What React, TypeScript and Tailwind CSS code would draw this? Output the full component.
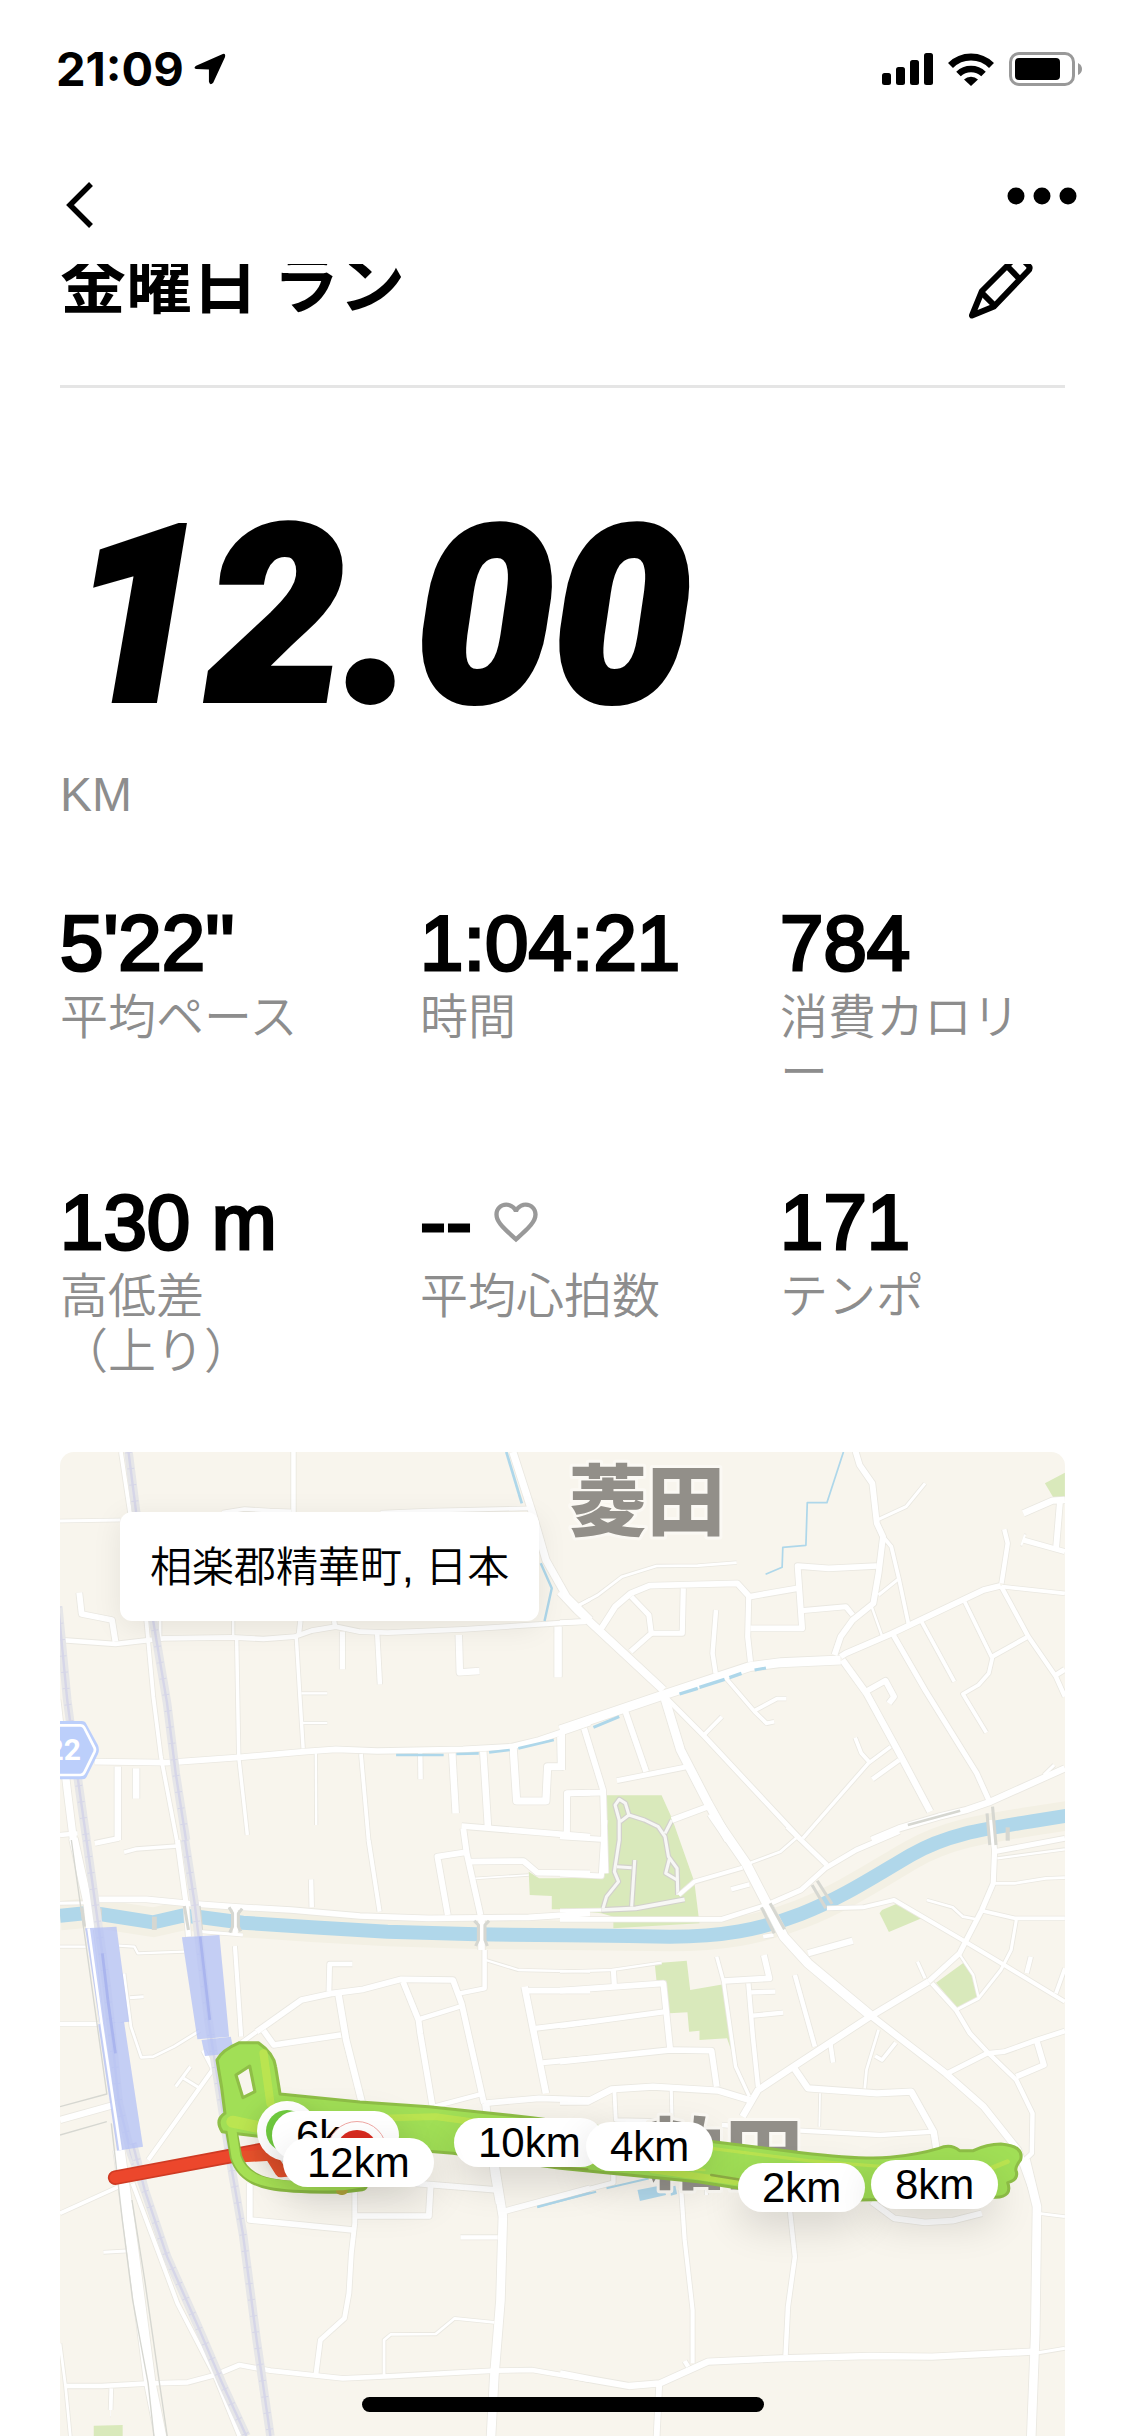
import React from "react";
import { MdFavoriteBorder } from "react-icons/md";

type Line = [number, string];

type Tile = {
  x: number;
  y: number;
  roads: Line[];
  water?: Line[];
  lakes?: string[];
  parks?: string[];
  paths?: Line[];
  rails?: string[];
  stations?: string[];
  edges?: Line[];
};

const tiles: Tile[] = [
  {
    x: 50,
    y: 1440,
    rails: ["228,36 250,216 300,545 340,790 365,1000 395,1200", "24,500 50,780 80,1010 106,1200"],
    roads: [
      [12, "206,36 232,216 280,545 300,770 322,950 368,1200"],
      [22, "20,780 50,1050 68,1200"],
      [14, "707,36 707,216"],
      [10, "29,243 205,240"],
      [12, "500,218 565,207 640,212 700,214"],
      [12, "960,218 1100,212 1390,205"],
      [22, "1344,36 1400,216 1440,360 1500,470 1568,540"],
      [18, "85,458 92,522 180,540 190,605"],
      [15, "29,600 190,612 330,595 530,592 620,597 710,590 760,572 830,560 900,575 980,578 1200,568 1440,552 1568,543"],
      [8, "320,543 320,595"],
      [8, "532,543 532,592"],
      [14, "727,543 722,590"],
      [14, "825,543 828,562"],
      [11, "542,597 548,950 562,1080 573,1185"],
      [11, "715,590 725,760 735,925"],
      [8, "730,760 805,760"],
      [8, "733,849 805,849"],
      [16, "849,575 849,688"],
      [14, "950,580 958,733"],
      [20, "1187,585 1190,697 1247,693"],
      [22, "1475,560 1475,712"],
      [10, "1528,500 1568,478"],
      [18, "130,965 340,968 550,952 740,935 830,928 950,933 1200,928 1340,920 1420,900 1568,848"],
      [20, "197,980 197,1200"],
      [20, "250,985 250,1076"],
      [8, "772,940 773,1155"],
      [12, "903,942 925,1200"],
      [14, "1075,940 1076,1018"],
      [20, "1168,940 1178,1120"],
      [20, "1258,935 1272,1165"],
      [22, "1345,925 1355,1083 1440,1083 1445,980 1485,980 1483,890"],
      [18, "1500,1190 1502,1060 1568,1058"],
    ],
    water: [
      [8, "1325,36 1370,190"],
      [7, "1425,370 1457,445 1436,543"],
      [8, "1005,945 1143,945"],
      [8, "1180,942 1245,940"],
      [8, "1275,937 1335,930"],
      [8, "1360,925 1463,900"],
    ],
  },
  {
    x: 560,
    y: 1440,
    parks: ["1408,130 1466,98 1466,172 1432,172"],
    roads: [
      [24, "0,455 50,510 300,750"],
      [26, "300,760 350,930 430,1090 490,1200"],
      [9, "48,500 110,465 180,410 280,378 400,377 513,368"],
      [18, "120,565 160,500 205,460 260,437 515,430 550,470 690,445"],
      [16, "207,470 258,525 265,580 205,635"],
      [16, "358,445 355,580 265,580"],
      [14, "453,510 443,640 452,700"],
      [16, "548,470 545,590 553,665"],
      [18, "553,565 703,565 690,378 780,385 920,378"],
      [16, "700,512 830,500 850,525"],
      [18, "857,30 870,75 907,130 920,250 938,290 925,400 910,490 850,540 815,590 797,645"],
      [10, "925,238 1005,200 1060,130"],
      [12, "930,280 962,320 985,420 1012,553"],
      [10, "985,415 925,465"],
      [8, "905,500 935,588"],
      [28, "0,870 300,765 550,680 640,668 815,660"],
      [18, "815,650 830,640 965,580 1230,450 1280,437"],
      [14, "1290,268 1300,310 1282,430"],
      [12, "1285,440 1466,460"],
      [14, "1280,437 1360,590 1440,710 1466,770"],
      [16, "1440,705 1466,688"],
      [20, "1345,220 1430,182 1466,180"],
      [18, "1452,182 1440,330"],
      [16, "1345,300 1466,335"],
      [36, "1342,299 1348,301"],
      [12, "1050,545 1145,725"],
      [12, "1175,485 1255,655 1245,700 1215,735 1170,762 1238,878"],
      [14, "1255,650 1355,592"],
      [16, "965,580 1060,750 1210,1000 1245,1080"],
      [20, "820,660 890,760 980,930 1075,1115"],
      [18, "888,755 945,722 970,770 955,790"],
      [11, "960,920 895,970 705,1195"],
      [12, "857,893 875,940 900,968"],
      [14, "985,960 907,1018"],
      [15, "300,765 420,890 700,1200"],
      [12, "415,888 470,830"],
      [12, "480,712 565,815 600,850 622,845"],
      [12, "565,812 630,776 657,776"],
      [18, "70,865 125,1050 132,1300"],
      [18, "190,815 250,995"],
      [16, "165,1022 370,980"],
      [18, "20,1180 20,1060 120,1058"],
      [20, "5,880 5,990"],
      [16, "0,548 75,545"],
      [10, "0,560 0,710"],
      [18, "325,1140 430,1100"],
      [20, "905,1200 985,1165 1100,1130 1180,1110 1250,1085 1466,985"],
      [10, "1405,1005 1435,975"],
    ],
    water: [
      [5, "823,36 775,188 718,188 714,316 647,322 645,382 597,403"],
      [10, "347,762 400,745"],
      [10, "405,742 478,718"],
      [10, "492,713 527,700"],
      [9, "565,690 598,684"],
      [9, "97,862 172,830"],
    ],
    edges: [[8, "1010,1155 1162,1112"]],
  },
  {
    x: 50,
    y: 1820,
    parks: ["1390,155 1420,175 1575,175 1575,268 1457,268 1457,228 1393,225"],
    rails: [
      "106,60 130,240 165,500 200,850 235,1000 275,1110",
      "392,60 420,250 460,600 490,800 528,1050",
    ],
    stations: [
      "102,325 193,320 230,605 145,613",
      "140,613 215,605 270,980 195,992",
      "383,352 492,345 520,650 428,658",
      "440,660 525,650 535,700 450,708",
    ],
    roads: [
      [26, "68,55 110,250 118,330"],
      [14, "118,330 150,610 185,850 205,1000"],
      [16, "370,60 395,250 402,350"],
      [14, "445,690 475,750"],
      [14, "29,45 80,40"],
      [16, "130,70 200,55"],
      [12, "215,97 250,87 370,78"],
      [18, "115,238 280,238 400,250 560,262 700,270 900,288 1100,295 1390,292 1568,280"],
      [10, "29,250 110,248"],
      [10, "440,335 560,345"],
      [13, "537,378 555,650"],
      [8, "200,377 245,380 255,400 390,395"],
      [8, "29,380 105,380"],
      [9, "215,460 235,620 265,712 300,710 360,680 435,632"],
      [10, "232,533 272,530"],
      [14, "29,612 140,612"],
      [10, "365,800 408,740"],
      [10, "388,775 435,805"],
      [13, "285,1020 475,745 560,665 600,635"],
      [18, "600,635 730,540 820,520 910,508 1020,478 1170,480 1195,550 1260,850"],
      [18, "620,632 650,675 845,645"],
      [14, "758,178 760,262"],
      [15, "810,515 812,432 878,432"],
      [20, "838,525 860,660 905,845"],
      [18, "1025,485 1070,600 1075,640 1110,855"],
      [14, "1070,598 1190,560"],
      [14, "1190,520 1262,505 1262,390"],
      [8, "1265,420 1360,450 1568,455"],
      [13, "925,60 957,275"],
      [18, "1155,285 1125,110 1205,97"],
      [18, "1200,25 1210,100 1250,285"],
      [18, "1195,18 1568,50"],
      [18, "1220,125 1375,123 1415,158 1568,160"],
      [6, "1235,175 1390,165"],
      [20, "1253,290 1253,390"],
      [16, "538,262 538,340"],
      [20, "1378,500 1440,820"],
      [18, "1375,512 1568,512"],
      [16, "1410,625 1568,605"],
      [16, "1430,728 1568,715"],
      [14, "1115,860 1260,820"],
      [18, "1260,850 1420,835 1568,840"],
      [22, "1265,850 1290,1060 1305,1150"],
      [20, "29,900 185,855"],
    ],
    edges: [
      [9, "92,262 100,320"],
      [9, "146,265 146,295"],
      [9, "390,258 402,330"],
      [9, "433,258 440,330"],
      [14, "303,290 303,330"],
      [9, "520,262 530,280 530,320 522,338"],
      [9, "558,266 547,280 547,320 554,334"],
      [9, "1232,302 1244,315 1244,360 1236,378"],
      [9, "1275,302 1263,315 1263,360 1270,378"],
      [4, "29,860 165,822 62,60"],
      [4, "29,945 165,905"],
    ],
  },
  {
    x: 560,
    y: 1820,
    parks: [
      "0,175 125,175 134,-74 295,-74 325,-5 390,185 405,310 155,325 155,290 120,280 0,268",
      "275,430 368,422 378,510 475,493 497,690 485,655 405,660 405,632 375,635 370,577 318,580 305,485 280,480",
      "935,270 985,248 1050,295 955,336 928,280",
      "1092,488 1172,428 1200,470 1213,530 1152,563",
    ],
    paths: [
      [9, "125,265 135,230 170,185 158,155 172,60 172,0 160,-45 172,-62 190,-50 200,-15 175,5"],
      [9, "200,-15 245,0 285,20 305,50 315,110 340,145 342,225"],
      [9, "325,0 305,40"],
      [9, "318,115 307,160 340,180"],
      [9, "217,120 208,260"],
      [9, "165,140 208,143"],
      [11, "120,270 220,265 362,238"],
    ],
    roads: [
      [16, "0,50 120,58"],
      [16, "0,162 120,168 130,0"],
      [10, "0,272 120,270"],
      [15, "0,298 470,298 600,255 700,210 770,145 860,90 985,35"],
      [28, "440,-20 540,130 600,250 650,350 720,430 900,585"],
      [20, "900,585 1120,760 1230,860 1330,990 1375,1120"],
      [15, "660,20 775,135"],
      [9, "550,130 640,95 690,50"],
      [14, "497,208 550,193"],
      [13, "345,225 390,185 530,143"],
      [13, "775,265 880,262 970,240 1160,355 1290,435 1466,545"],
      [16, "1250,0 1262,90 1258,190 1225,270 1160,400 1070,485"],
      [20, "1070,485 900,590 670,745 575,810 530,890"],
      [16, "1262,95 1466,55"],
      [8, "1270,115 1466,88"],
      [9, "1262,190 1320,190 1410,175 1466,173"],
      [12, "1225,272 1320,295 1466,295"],
      [9, "1065,240 1140,262 1170,290 1205,297"],
      [10, "1325,300 1310,390 1280,450 1215,535 1150,570"],
      [12, "1440,520 1466,445"],
      [14, "1367,410 1355,460"],
      [8, "1158,400 1200,465 1215,530"],
      [10, "1038,425 1060,475"],
      [14, "1080,490 1150,570 1190,640 1240,695 1325,780 1372,880 1370,1000 1350,1020"],
      [15, "1125,760 1240,700 1290,695 1385,660 1466,633"],
      [18, "1385,665 1405,735 1325,770"],
      [20, "720,400 850,362"],
      [12, "590,350 620,345"],
      [14, "682,465 740,680"],
      [11, "455,410 475,485 510,740 550,830"],
      [18, "475,483 608,475 592,405"],
      [14, "547,490 560,650 575,800"],
      [14, "555,517 625,515"],
      [14, "560,587 648,578"],
      [8, "0,455 150,450 295,428"],
      [16, "155,450 158,500"],
      [18, "0,512 300,490 320,690"],
      [16, "0,618 305,575"],
      [18, "0,725 320,690 440,692 455,800"],
      [20, "0,845 80,845 150,808 270,800 460,812 550,840"],
      [12, "158,815 162,900 290,903"],
      [10, "323,810 325,890"],
      [14, "785,670 793,728"],
      [9, "925,630 890,750 885,805"],
      [12, "975,668 935,720 915,708"],
      [20, "680,745 720,805 920,820 1020,815 1085,935 1095,1000"],
      [6, "755,820 753,920"],
      [14, "470,915 700,932 930,945 1085,935"],
      [14, "0,1130 155,1088 155,1050"],
      [10, "425,1100 425,1125"],
    ],
    water: [
      [6, "-66,1160 105,1115"],
      [6, "135,1105 260,1075"],
    ],
    lakes: ["225,1110 300,1095 308,1125 232,1143", "320,1100 335,1097 340,1122 322,1127"],
    edges: [
      [9, "585,262 622,340"],
      [9, "610,250 652,328"],
      [9, "732,195 772,265"],
      [9, "747,182 790,252"],
      [9, "1240,-20 1248,75"],
      [9, "1256,-40 1266,75"],
      [12, "1300,22 1300,62"],
    ],
  },
  {
    x: 50,
    y: 2100,
    parks: ["127,977 211,975 211,1008 127,1008"],
    rails: ["240,130 275,270 340,470 430,680 500,850 570,1008", "528,210 560,400 600,720 640,1008"],
    roads: [
      [34, "200,150 240,450 290,850 323,1020"],
      [13, "240,250 370,610 480,830 550,1008"],
      [12, "29,340 200,260"],
      [10, "155,457 235,452"],
      [15, "45,858 150,858 290,850 400,847 480,825 550,795 640,812 850,835 1000,828 1290,812 1400,810 1568,840"],
      [9, "29,730 45,858 60,1020"],
      [12, "178,865 176,930"],
      [34, "175,933 177,933"],
      [18, "580,250 580,360 880,390"],
      [15, "885,260 885,370 875,460 868,580 855,655 785,720 772,825"],
      [18, "890,348 1100,348 1105,260"],
      [18, "1060,250 1300,270"],
      [26, "1290,190 1315,350 1308,600 1290,830 1280,1020"],
      [18, "1315,335 1568,265"],
      [14, "1192,412 1300,412"],
      [9, "970,825 970,720 990,703 1120,702 1175,655 1290,667"],
    ],
    edges: [
      [4, "178,70 210,360 240,600 285,850 303,1020"],
      [4, "238,300 275,540 318,850 342,1020"],
    ],
    water: [[6, "1415,322 1568,278"]],
  },
  {
    x: 560,
    y: 2100,
    roads: [
      [20, "0,820 100,840 200,858 290,850 430,785 640,775 900,768 1080,770 1370,755"],
      [10, "1380,760 1466,745"],
      [13, "352,270 362,420 385,630 385,790"],
      [14, "668,335 682,470 662,620 655,765"],
      [18, "288,855 280,1020"],
      [14, "362,783 372,800"],
      [26, "1352,180 1385,320 1380,700 1368,1020"],
      [9, "1390,340 1466,350"],
      [18, "905,305 970,355 1060,367 1140,362 1225,340"],
    ],
  },
];

const pins = [
  { label: "6km", left: 272, top: 2111, layer: "z-10" },
  { label: "10km", left: 454, top: 2118, layer: "z-10" },
  { label: "4km", left: 586, top: 2122, layer: "z-10" },
  { label: "2km", left: 738, top: 2163, layer: "z-10" },
  { label: "8km", left: 871, top: 2160, layer: "z-10" },
  { label: "12km", left: 283, top: 2138, layer: "z-30" },
];

const place = (left: number, top: number) => ({
  left: `${((left - 60) / 1005) * 100}%`,
  top: `${((top - 1452) / 984) * 100}%`,
});

const stats = [
  { value: "5'22''", label: "平均ペース" },
  { value: "1:04:21", label: "時間" },
  { value: "784", label: "消費カロリー" },
  { value: "130 m", label: "高低差\n（上り）" },
  { value: "--", label: "平均心拍数", heart: true },
  { value: "171", label: "テンポ" },
];

const jp = "font-['Liberation_Sans','Noto_Sans_CJK_JP',sans-serif]";

function Layer({ draw }: { draw: (tile: Tile) => React.ReactNode }) {
  return (
    <>
      {tiles.map((tile) => (
        <g key={`${tile.x}-${tile.y}`} transform={`translate(${tile.x} ${tile.y}) scale(0.34439 0.33333)`}>
          {draw(tile)}
        </g>
      ))}
    </>
  );
}

const strokes = (lines: Line[] | undefined, color: string, extra = 0) =>
  lines?.map(([width, points]) => (
    <polyline key={points} points={points} fill="none" stroke={color} strokeWidth={width + extra} strokeLinejoin="round" />
  ));

const shapes = (list: string[] | undefined, color: string, opacity = 1) =>
  list?.map((points) => <polygon key={points} points={points} fill={color} opacity={opacity} />);

const river =
  "M29,287 L100,280 150,283 300,307 385,287 440,292 560,308 760,322 980,335 1240,343 1500,346 1681,348 1800,350 C1950,350 2060,330 2180,282 S2400,165 2500,105 S2700,28 2850,4 L2960,-14";

const routeOutline =
  "M485,720 Q500,690 550,668 L605,668 Q650,700 655,740 L668,822 L900,846 1100,860 1400,893 1926,965 2181,998 Q2361,1020 2440,1012 T2581,985 Q2616,970 2641,992 L2681,992 Q2720,972 2761,972 Q2830,978 2818,1020 Q2800,1045 2806,1055 Q2812,1080 2781,1088 Q2795,1130 2746,1132 L2351,1140 2001,1105 1881,1085 1481,1045 1170,1000 700,960 550,942 500,935 Q478,900 508,880 L498,800 Z M540,765 L580,738 L595,815 L560,833 Z";

function MapDrawing() {
  return (
    <svg viewBox="60 1452 1005 984" className="block h-auto w-full" aria-hidden="true">
      <rect x="60" y="1452" width="1005" height="984" fill="#f8f5ed" />
      <g transform="translate(50 1820) scale(0.34439 0.33333)" fill="none">
        <path d={river} stroke="#f3f0e4" strokeWidth="88" />
      </g>
      <Layer draw={(t) => shapes(t.parks, "#d9e9bb")} />
      <g transform="translate(50 1820) scale(0.34439 0.33333)" fill="none">
        <path d={river} stroke="#b0d7ea" strokeWidth="42" />
      </g>
      <Layer draw={(t) => strokes(t.paths, "#d2d1cb", 7)} />
      <Layer draw={(t) => strokes(t.paths, "#f7f7f5", 0)} />
      <Layer draw={(t) => strokes(t.roads, "#eae8e1", 4)} />
      <Layer draw={(t) => strokes(t.roads, "#ffffff", -1)} />
      <Layer draw={(t) => strokes(t.edges, "#d6d7d1")} />
      <Layer draw={(t) => strokes(t.water, "#aed7ea")} />
      <Layer draw={(t) => shapes(t.lakes, "#b0d7ea")} />
      <Layer
        draw={(t) =>
          t.rails?.map((points) => (
            <g key={points} fill="none">
              <polyline points={points} stroke="#e6e6e8" strokeWidth="25" />
              <polyline points={points} stroke="#d6d6e8" strokeWidth="7" />
              <polyline points={points} stroke="#d6d6e8" strokeWidth="20" strokeDasharray="3 46" />
            </g>
          ))
        }
      />
      <Layer draw={(t) => shapes(t.stations, "#b3c0f5", 0.75)} />
      <g transform="translate(50 1820) scale(0.34439 0.33333)" fill="none">
        <path d="M112,325 L150,610 L205,990" stroke="#ffffff" strokeWidth="8" />
        <path d="M152,400 L168,540 L190,700 M436,350 L464,600" stroke="#aab5ee" strokeWidth="8" />
      </g>

      <g transform="translate(50 1440) scale(0.34439 0.33333)">
        <path d="M0,843 H92 Q102,843 106,853 L139,915 Q145,929 139,943 L108,1007 Q104,1018 94,1018 H0 Z" fill="#bccffb" />
        <path d="M0,856 H88 Q96,856 100,864 L129,923 Q132,929 129,936 L100,997 Q97,1005 88,1005 H0" fill="none" stroke="#fff" strokeWidth="8" />
      </g>
      <text x="81" y="1760" textAnchor="end" className="font-['Roboto',sans-serif] text-[30px] font-bold" fill="#fff">
        22
      </text>

      <g
        className="font-['Noto_Sans_CJK_JP',sans-serif] text-[78px] font-black"
        fill="#928f89"
        stroke="#fbf9f4"
        strokeWidth="6"
        strokeLinejoin="round"
        paintOrder="stroke"
      >
        <text x="569" y="1530">菱田</text>
        <text x="647" y="2183">粕田</text>
      </g>

      <g transform="translate(50 1820) scale(0.34439 0.33333)" strokeLinecap="round" strokeLinejoin="round">
        <path d="M190,1073 L540,1005 L640,985" fill="none" stroke="#cf3b24" strokeWidth="44" />
        <path d="M190,1073 L540,1005 L640,985" fill="none" stroke="#ec472c" strokeWidth="34" />
        <path d="M560,1010 L640,1005 L670,1055 L720,1050" fill="none" stroke="#e8522c" strokeWidth="34" />
        <path d="M528,940 L540,1010 Q560,1075 640,1092 Q700,1105 850,1103 L905,1096" fill="none" stroke="#8cbb44" strokeWidth="36" />
        <path d="M845,1110 L850,1110" stroke="#b4a63c" strokeWidth="30" />
        <path d={routeOutline} fill="#a1df56" stroke="#8fbf47" strokeWidth="9" fillRule="evenodd" />
        <path d="M528,930 L540,1010 Q560,1075 640,1088 Q700,1100 850,1098 L905,1090" fill="none" stroke="#a6e055" strokeWidth="26" />
        <g fill="none" stroke="#bfe650" opacity="0.85">
          <path d="M620,700 L640,850" strokeWidth="24" />
          <path d="M530,905 L600,920" strokeWidth="36" />
          <path d="M760,900 L1120,890 L1400,930 L1700,960" strokeWidth="20" />
          <path d="M1920,985 L2200,1022 L2420,1040" strokeWidth="10" />
          <path d="M1750,1050 L1990,1085" strokeWidth="20" />
          <path d="M1500,1025 L1900,1050" strokeWidth="8" />
          <path d="M2720,1050 L2780,1025" strokeWidth="14" />
        </g>
        <path d="M1920,1065 L2010,1080 M1450,1040 L1560,1048" stroke="#8fae45" strokeWidth="7" fill="none" />
      </g>
    </svg>
  );
}

function StatusBar() {
  return (
    <div className="flex h-[132px] items-center justify-between pt-[6px] pr-[43px] pl-[56px]">
      <div className="flex items-center gap-[10px]">
        <time className="font-['Inter',sans-serif] text-[47px] leading-[54px] font-bold">21:09</time>
        <svg width="32" height="32" viewBox="0 0 30 30" aria-hidden="true">
          <path d="M27 1 L2 12 Q-1 14 2 15 L14 15.500 V27 Q15 31 18 28 L29 4 Q30 0 27 1 Z" />
        </svg>
      </div>
      <div className="flex items-center gap-[15px]">
        <svg width="51" height="32" viewBox="0 0 51 32" aria-hidden="true">
          <rect x="0" y="20" width="9" height="12" rx="2.500" />
          <rect x="14" y="14" width="9" height="18" rx="2.500" />
          <rect x="28" y="7" width="9" height="25" rx="2.500" />
          <rect x="42" y="0" width="9" height="32" rx="2.500" />
        </svg>
        <svg width="46" height="33" viewBox="0 0 46 33" aria-hidden="true">
          <path d="M2.500 12.500 A29 29 0 0 1 43.500 12.500" fill="none" stroke="#000" strokeWidth="7" />
          <path d="M10.500 21 A18 18 0 0 1 35.500 21" fill="none" stroke="#000" strokeWidth="6.500" />
          <path d="M16 26.500 A10 10 0 0 1 30 26.500 L23 33 Z" />
        </svg>
        <svg width="73" height="34" viewBox="0 0 73 34" aria-hidden="true">
          <rect x="1.500" y="1.500" width="63" height="31" rx="8.500" fill="none" stroke="#999" strokeWidth="3" />
          <rect x="6" y="6" width="45" height="22" rx="4" />
          <path d="M69 11 Q73 13 73 17 T69 23 Z" fill="#999" />
        </svg>
      </div>
    </div>
  );
}

export default function App() {
  return (
    <div className={`min-h-screen bg-white text-black ${jp}`} lang="ja">
      <header className="sticky top-0 z-40 h-[264px] bg-white">
        <StatusBar />
        <nav className="flex items-start justify-between pt-[47px] pr-[48px] pl-[66px]">
          <button type="button" aria-label="戻る" className="block pt-[3px]">
            <svg width="27" height="46" viewBox="0 0 27 46" aria-hidden="true">
              <path d="M25 2 L4 23 L25 44" fill="none" stroke="#000" strokeWidth="5.500" />
            </svg>
          </button>
          <button type="button" aria-label="その他" className="block pt-[8px]">
            <svg width="70" height="18" viewBox="0 0 70 18" aria-hidden="true">
              <circle cx="9" cy="9" r="8.500" />
              <circle cx="35" cy="9" r="8.500" />
              <circle cx="61" cy="9" r="8.500" />
            </svg>
          </button>
        </nav>
      </header>

      <main className="px-[60px]">
        <section className="-mt-[18px] flex items-end justify-between border-b-[3px] border-[#e5e5e5] pr-[30px] pb-[66px]">
          <h1 className="pb-[7px] font-['Noto_Sans_CJK_JP',sans-serif] text-[66px] leading-[66px] font-bold">金曜日 ラン</h1>
          <button type="button" aria-label="編集">
            <svg width="66" height="66" viewBox="0 0 66 66" aria-hidden="true">
              <g fill="none" stroke="#000" strokeWidth="6" strokeLinejoin="round">
                <path d="M3 62.500 L13 38 L46 5 Q49 2 52 5 L59 12 Q62 15 59 18 L25 53.500 Z" />
                <path d="M38.500 13.500 L51 26.500 M13 40 L26 53" />
              </g>
            </svg>
          </button>
        </section>

        <section className="mt-[102px]">
          <p className="pl-[10px] font-['Roboto',sans-serif] text-[244px] leading-[255px] font-black whitespace-nowrap italic [-webkit-text-stroke:6px_#000]">
            12.00
          </p>
          <p className="mt-[22px] text-[48px] leading-[56px] text-[#8d8d8d]">KM</p>
        </section>

        <dl className="mt-[80px] grid grid-cols-3 gap-x-[75px] gap-y-[84px]">
          {stats.map((stat) => (
            <div key={stat.label} className="flex flex-col">
              <dt className="order-2 mt-[3px] min-h-[112px] font-['Noto_Sans_CJK_JP',sans-serif] text-[48px] leading-[55px] font-[350] whitespace-pre-line text-[#8d8d8d]">
                {stat.label}
              </dt>
              <dd className="order-1 flex h-[80px] items-center text-[78px] leading-[80px] whitespace-nowrap [-webkit-text-stroke:3px_#000]">
                {stat.value}
                {stat.heart && (
                  <MdFavoriteBorder className="ml-[18px] text-[52px] text-[#999] [-webkit-text-stroke:0]" aria-hidden="true" />
                )}
              </dd>
            </div>
          ))}
        </dl>

        <section aria-label="地図" className="relative mt-[75px] overflow-hidden rounded-t-[14px]">
          <MapDrawing />
          <p
            style={place(120, 1512)}
            className="absolute rounded-[12px] bg-white px-[30px] pt-[28px] pb-[26px] font-['Liberation_Sans','Noto_Sans_CJK_JP',sans-serif] text-[42px] leading-[55px] font-[350] whitespace-nowrap shadow-[0_6px_30px_rgba(0,0,0,0.08)]"
          >
            相楽郡精華町, 日本
          </p>
          <span style={place(257, 2101)} className="absolute flex size-[60px] items-center justify-center rounded-full bg-white shadow-[0_6px_24px_rgba(0,0,0,0.12)]">
            <span className="size-[42px] rounded-full bg-[#70cb3f]" />
          </span>
          <span style={place(327, 2121)} className="absolute z-20 flex size-[60px] items-center justify-center rounded-full border border-[#f0a8a4] bg-white">
            <span className="size-[42px] rounded-full bg-[#d92b1f]" />
          </span>
          {pins.map((pin) => (
            <span
              key={pin.label}
              style={place(pin.left, pin.top)}
              className={`absolute ${pin.layer} rounded-full bg-white px-[24px] text-[42px] leading-[49px] whitespace-nowrap shadow-[0_14px_40px_rgba(0,0,0,0.14)]`}
            >
              {pin.label}
            </span>
          ))}
        </section>
      </main>

      <div className="fixed bottom-[24px] left-1/2 z-50 h-[15px] w-[402px] -translate-x-1/2 rounded-full bg-black" />
    </div>
  );
}
